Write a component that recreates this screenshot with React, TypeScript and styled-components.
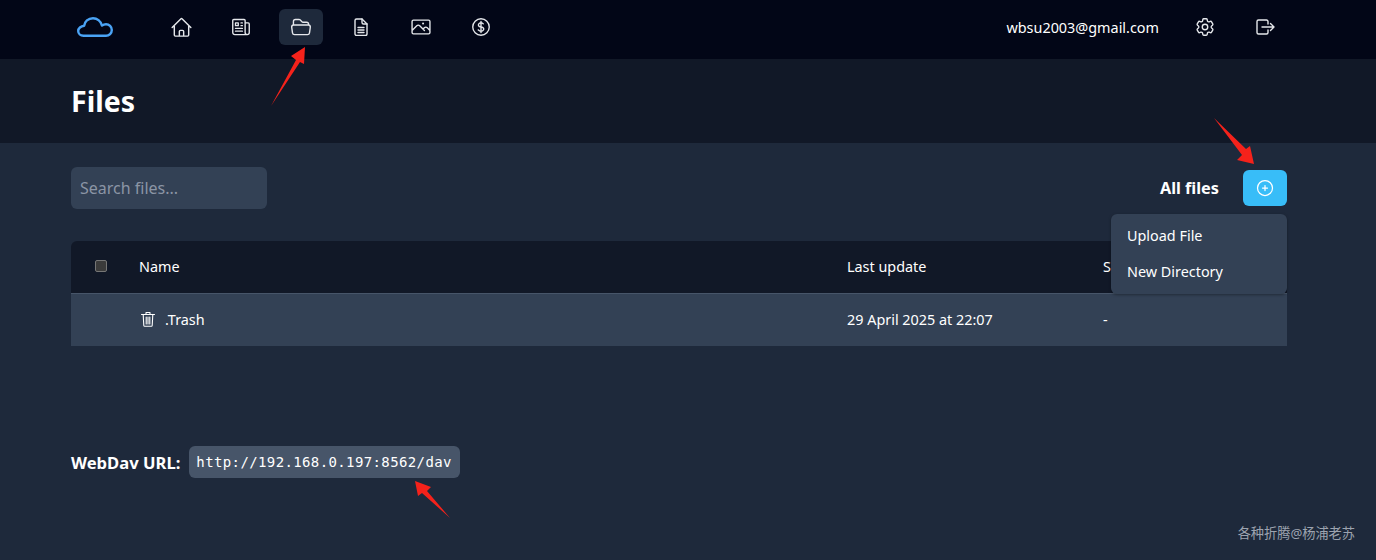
import styled, { createGlobalStyle } from 'styled-components'
import {
  HiOutlineCog6Tooth,
  HiOutlineCurrencyDollar,
  HiOutlineFolderOpen,
  HiOutlineHome,
  HiOutlineNewspaper,
  HiOutlinePhoto,
  HiOutlinePlusCircle,
} from 'react-icons/hi2'

const GlobalStyle = createGlobalStyle`
  html, body {
    margin: 0;
    background: #1e293b;
  }
  body {
    font-family: "Noto Sans", "Noto Sans CJK SC", sans-serif;
    color: #fff;
  }
`

const Page = styled.div`
  position: relative;
  height: 560px;
  overflow: hidden;
  display: flex;
  flex-direction: column;
`

const Nav = styled.nav`
  box-sizing: border-box;
  height: 59px;
  flex: none;
  display: flex;
  align-items: center;
  padding: 0 81px 5px 77px;
  background: #020617;
`

const Logo = styled.div`
  display: flex;
  width: 36px;
  margin-right: 46px;
  color: #4aa3f5;
`

const NavLinks = styled.div`
  display: flex;
  gap: 16px;
  flex: 1;
`

const NavLink = styled.a<{ $active?: boolean }>`
  width: 44px;
  height: 36px;
  display: flex;
  align-items: center;
  justify-content: center;
  border-radius: 6px;
  color: #e5e7eb;
  background: ${(p) => (p.$active ? '#1e293b' : 'transparent')};
`

const UserEmail = styled.span`
  font-size: 14.4px;
  margin-right: 16px;
`

const NavAction = styled.a`
  width: 60px;
  display: flex;
  justify-content: center;
  color: #e5e7eb;
`

const TitleBar = styled.header`
  height: 84px;
  flex: none;
  display: flex;
  align-items: center;
  padding: 0 71px;
  background: #111827;
`

const Title = styled.h1`
  margin: 0;
  font-size: 28.5px;
  line-height: 36px;
  font-weight: 700;
`

const Content = styled.main`
  flex: 1;
  padding: 24px 89px 0 71px;
`

const Toolbar = styled.div`
  position: relative;
  height: 42px;
  display: flex;
  align-items: center;
  justify-content: space-between;
`

const Search = styled.input`
  box-sizing: border-box;
  width: 196px;
  height: 42px;
  padding: 0 9px;
  border: 0;
  border-radius: 6px;
  background: #334155;
  color: #fff;
  font: inherit;
  font-size: 16px;

  &::placeholder {
    color: #8b95a5;
  }
`

const ToolbarRight = styled.div`
  display: flex;
  align-items: center;
  gap: 24px;
`

const Filter = styled.span`
  font-size: 16.3px;
  font-weight: 700;
`

const AddButton = styled.button`
  width: 44px;
  height: 36px;
  display: flex;
  align-items: center;
  justify-content: center;
  border: 0;
  border-radius: 6px;
  padding: 0;
  background: #38bdf8;
  color: #fff;
`

const Menu = styled.div`
  position: absolute;
  top: 47px;
  right: 0;
  z-index: 2;
  box-sizing: border-box;
  width: 176px;
  height: 80px;
  padding: 4px 0;
  border-radius: 6px;
  background: #334155;
  box-shadow: 0 1px 3px rgba(0, 0, 0, 0.35);
`

const MenuItem = styled.div`
  height: 36px;
  line-height: 36px;
  padding-left: 16px;
  font-size: 14.4px;
`

const Table = styled.div`
  margin-top: 32px;
  font-size: 14.4px;
`

const Row = styled.div<{ $head?: boolean }>`
  display: grid;
  grid-template-columns: 68px 708px 256px 1fr;
  align-items: center;
  height: 50px;
  padding-bottom: 2px;
  background: ${(p) => (p.$head ? '#111827' : '#334155')};
  border-radius: ${(p) => (p.$head ? '6px 6px 0 0' : '0')};
  border-bottom: ${(p) => (p.$head ? '1px solid #475569' : '0')};
`

const CheckCell = styled.div`
  display: flex;
  padding-left: 24px;
`

const Checkbox = styled.span`
  box-sizing: border-box;
  width: 12px;
  height: 12px;
  border: 1px solid #767676;
  border-radius: 2px;
  background: #3b3b3b;
`

const NameCell = styled.div`
  display: flex;
  align-items: center;
  gap: 9px;
  padding-left: 1px;
`

const DavLine = styled.div`
  display: flex;
  align-items: center;
  gap: 9px;
  margin-top: 100px;
`

const DavLabel = styled.span`
  font-size: 16.6px;
  font-weight: 700;
`

const DavUrl = styled.code`
  height: 32px;
  line-height: 32px;
  padding: 0 8px 0 7px;
  border-radius: 6px;
  background: #475569;
  font-family: "DejaVu Sans Mono", monospace;
  font-size: 14px;
  letter-spacing: 0.38px;
`

const Watermark = styled.span`
  position: absolute;
  right: 21px;
  bottom: 18px;
  font-size: 13.2px;
  line-height: 18px;
  color: #9ca3af;
`

const ArrowLayer = styled.svg`
  position: absolute;
  left: 0;
  top: 0;
  z-index: 3;
  pointer-events: none;
`

const LineIcon = styled.svg`
  display: block;
  fill: none;
  stroke: currentColor;
  stroke-linecap: round;
  stroke-linejoin: round;
`

function CloudIcon() {
  return (
    <LineIcon width="36" height="20" viewBox="0 0 36 20" strokeWidth="2.4">
      <path d="M6.5 18.8H29a5.8 5.8 0 0 0 0-11.6c-1.5 0-3 .6-4 1.4C23.8 4 20 1.2 16 1.2c-4.8 0-8.5 3.5-8.8 7.5C3.8 9 1.2 11.4 1.2 14c0 2.8 2.3 4.8 5.3 4.8Z" />
    </LineIcon>
  )
}

function DocumentIcon() {
  return (
    <LineIcon width="14" height="18" viewBox="0 0 14 18" strokeWidth="1.4">
      <path d="M2.5 1H8l5 5v10a1.5 1.5 0 0 1-1.5 1.5h-9A1.5 1.5 0 0 1 1 16V2.5A1.5 1.5 0 0 1 2.5 1Z" />
      <path d="M8 1v3.5A1.5 1.5 0 0 0 9.5 6H13" />
      <path d="M4 9.5h6M4 12h6M4 14.5h6" />
    </LineIcon>
  )
}

function LogoutIcon() {
  return (
    <LineIcon width="19" height="16" viewBox="0 0 19 16" strokeWidth="1.4">
      <path d="M12 5V2.5A1.5 1.5 0 0 0 10.5 1h-8A1.5 1.5 0 0 0 1 2.5v11A1.5 1.5 0 0 0 2.5 15h8a1.5 1.5 0 0 0 1.5-1.5V11" />
      <path d="M6 8h12M14.5 4.5 18 8l-3.5 3.5" />
    </LineIcon>
  )
}

function TrashIcon() {
  return (
    <LineIcon width="16" height="16" viewBox="-2 0 16 16" strokeWidth="1.1">
      <path d="M-.5 3.5h13M4 3.5v-2h4v2" />
      <path d="m1.2 3.5.6 11a.8.8 0 0 0 .8.7h6.8a.8.8 0 0 0 .8-.7l.6-11" />
      <path d="M4.2 6v7M6 6v7M7.8 6v7" />
    </LineIcon>
  )
}

export default function App() {
  return (
    <Page>
      <GlobalStyle />
      <Nav>
        <Logo>
          <CloudIcon />
        </Logo>
        <NavLinks>
          <NavLink>
            <HiOutlineHome size={23} />
          </NavLink>
          <NavLink>
            <HiOutlineNewspaper size={22} />
          </NavLink>
          <NavLink $active>
            <HiOutlineFolderOpen size={22} />
          </NavLink>
          <NavLink>
            <DocumentIcon />
          </NavLink>
          <NavLink>
            <HiOutlinePhoto size={22} />
          </NavLink>
          <NavLink>
            <HiOutlineCurrencyDollar size={22} />
          </NavLink>
        </NavLinks>
        <UserEmail>wbsu2003@gmail.com</UserEmail>
        <NavAction>
          <HiOutlineCog6Tooth size={22} />
        </NavAction>
        <NavAction>
          <LogoutIcon />
        </NavAction>
      </Nav>
      <TitleBar>
        <Title>Files</Title>
      </TitleBar>
      <Content>
        <Toolbar>
          <Search placeholder="Search files..." />
          <ToolbarRight>
            <Filter>All files</Filter>
            <AddButton>
              <HiOutlinePlusCircle size={20} />
            </AddButton>
          </ToolbarRight>
          <Menu>
            <MenuItem>Upload File</MenuItem>
            <MenuItem>New Directory</MenuItem>
          </Menu>
        </Toolbar>
        <Table>
          <Row $head>
            <CheckCell>
              <Checkbox />
            </CheckCell>
            <div>Name</div>
            <div>Last update</div>
            <div>Size</div>
          </Row>
          <Row>
            <div />
            <NameCell>
              <TrashIcon />
              .Trash
            </NameCell>
            <div>29 April 2025 at 22:07</div>
            <div>-</div>
          </Row>
        </Table>
        <DavLine>
          <DavLabel>WebDav URL:</DavLabel>
          <DavUrl>http://192.168.0.197:8562/dav</DavUrl>
        </DavLine>
      </Content>
      <Watermark>各种折腾@杨浦老苏</Watermark>
      <ArrowLayer width="1376" height="560" viewBox="0 0 1376 560">
        <path d="M271 106 L296 60 L291 56 L305 47 L304 64 L300 62 Z" fill="#f5221b" />
        <path d="M1214 118 L1246 149 L1250 146 L1254 164 L1237 160 L1242 155 Z" fill="#f5221b" />
        <path d="M450 518 L427 491 L431 487 L415 481 L418 496 L422 493 Z" fill="#f5221b" />
      </ArrowLayer>
    </Page>
  )
}
